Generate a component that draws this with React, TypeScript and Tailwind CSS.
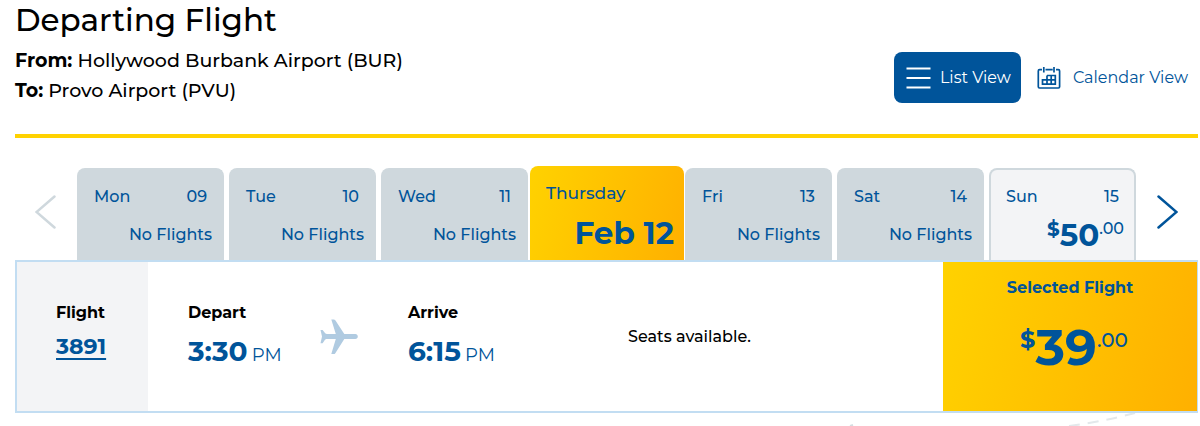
import clsx from "clsx";

interface Day {
  name: string;
  date: string;
  price?: string;
  selected?: boolean;
}

const days: Day[] = [
  { name: "Mon", date: "09" },
  { name: "Tue", date: "10" },
  { name: "Wed", date: "11" },
  { name: "Thursday", date: "Feb 12", selected: true },
  { name: "Fri", date: "13" },
  { name: "Sat", date: "14" },
  { name: "Sun", date: "15", price: "50" },
];

function ListIcon() {
  return (
    <svg width="25" height="22" viewBox="0 0 25 22" stroke="currentColor" strokeWidth="2" aria-hidden="true">
      <path d="M0.500 1.500h24M0.500 11h24M0.500 20.500h24" />
    </svg>
  );
}

function CalendarIcon() {
  return (
    <svg width="24" height="24" viewBox="0 0 24 24" fill="none" stroke="currentColor" aria-hidden="true">
      <path
        d="M5 3.700H2.500a1.200 1.200 0 0 0-1.200 1.200v15.900A1.200 1.200 0 0 0 2.500 22h18.900a1.200 1.200 0 0 0 1.200-1.200V4.900a1.200 1.200 0 0 0-1.200-1.200H19M8.500 3.700h7.200M6.800 1v5.500M17 1v5.500"
        strokeWidth="1.7"
      />
      <path d="M10 9.500h8.300v8.700H5.500v-4.400h12.800M5.500 13.800v4.400M10 9.500v8.700M14.200 9.500v8.700" strokeWidth="1.7" />
    </svg>
  );
}

function PlaneIcon() {
  return (
    <svg width="38" height="36" viewBox="0 0 38 36" fill="#b0cbe1" aria-hidden="true">
      <path d="M11.300.4h2.500c.6 0 1.100.3 1.500.9l9 13.600h11c1.500 0 2.500 1.200 2.500 2.500s-1 2.500-2.500 2.500h-11l-9 14.300c-.4.600-.9.900-1.500.9h-2.500l4.500-15.200H6.800c-1 0-1.500.4-2 1.200l-2.200 3.200H.5l1.500-6.900L.5 10.900h2.100l2.200 2.900c.5.700 1 1.100 2 1.100h9z" />
    </svg>
  );
}

function Price({ amount, large }: { amount: string; large?: boolean }) {
  return (
    <span className="flex items-start text-[#00549a]">
      <span className={clsx("font-bold", large ? "text-2xl leading-8" : "text-xl leading-6")}>$</span>
      <span className={clsx("font-bold", large ? "text-[50px] leading-12" : "text-[31px] leading-9")}>
        {amount}
      </span>
      <span className={clsx("font-medium", large ? "text-xl leading-8" : "text-base leading-6")}>.00</span>
    </span>
  );
}

function DayTab({ day }: { day: Day }) {
  if (day.selected) {
    return (
      <button
        role="tab"
        aria-selected="true"
        className="-mr-1 -ml-[3px] flex h-[94px] flex-col items-start rounded-t-lg bg-linear-105 from-[#ffd200] to-[#ffb000] pt-[15px] pr-[10px] pl-4 text-[#00549a]"
      >
        <span className="text-[17px] leading-6 font-medium">{day.name}</span>
        <span className="mt-2 self-end text-[31px] leading-10 font-bold">{day.date}</span>
      </button>
    );
  }

  return (
    <button
      role="tab"
      aria-selected="false"
      className={clsx(
        "flex h-[92px] flex-col rounded-t-lg border-2 border-b-0 border-[#cfd8dd] px-[15px] pt-[15px] text-base leading-6 font-medium text-[#00549a]",
        day.price ? "bg-[#f3f4f6]" : "bg-[#cfd8dd]"
      )}
    >
      <span className="flex w-full justify-between">
        <span>{day.name}</span>
        <span>{day.date}</span>
      </span>
      <span className="-mr-[5px] flex flex-1 items-center self-end">
        {day.price ? <Price amount={day.price} /> : "No Flights"}
      </span>
    </button>
  );
}

function FlightTime({ label, time }: { label: string; time: string }) {
  return (
    <div>
      <h2 className="text-base leading-6 font-bold">{label}</h2>
      <p className="mt-1.5 leading-10 text-[#00549a]">
        <span className="text-[28px] font-bold">{time}</span> <span className="text-lg">PM</span>
      </p>
    </div>
  );
}

export default function App() {
  return (
    <main className="overflow-hidden bg-white pr-0.5 pl-[15px] font-[Montserrat,Inter,sans-serif] text-black">
      <header className="flex items-end justify-between border-b-4 border-[#ffd200] pb-7">
        <div className="text-[19px] leading-[30px] font-medium">
          <h1 className="pb-1.5 text-[31px] leading-10">Departing Flight</h1>
          <p>
            <strong className="font-bold">From:</strong> Hollywood Burbank Airport (BUR)
          </p>
          <p>
            <strong className="font-bold">To:</strong> Provo Airport (PVU)
          </p>
        </div>
        <div className="mb-[3px] flex items-center text-base leading-6 text-[#00549a]">
          <button className="flex h-[51px] items-center gap-[9px] rounded-lg bg-[#00549a] px-[10px] pl-3 text-white">
            <ListIcon />
            List View
          </button>
          <button className="flex h-[51px] items-center gap-3 pr-[10px] pl-4">
            <CalendarIcon />
            Calendar View
          </button>
        </div>
      </header>

      <div className="mt-7 flex items-end">
        <button aria-label="Previous days" className="flex h-[94px] w-[62px] items-center justify-center text-[#cfd8dd]">
          <svg width="22" height="36" viewBox="0 0 22 36" fill="none" stroke="currentColor" strokeWidth="2.5" strokeLinecap="round">
            <path d="M19.500 1.500 1.500 17l18 15.500" />
          </svg>
        </button>
        <div role="tablist" aria-label="Departure date" className="grid flex-1 grid-cols-7 items-end gap-[5px]">
          {days.map((day) => (
            <DayTab key={day.name} day={day} />
          ))}
        </div>
        <button aria-label="Next days" className="flex h-[94px] w-[62px] items-center justify-center text-[#00549a]">
          <svg width="22" height="36" viewBox="0 0 22 36" fill="none" stroke="currentColor" strokeWidth="2.5" strokeLinecap="round">
            <path d="M2.500 1.500 20.500 17l-18 15.500" />
          </svg>
        </button>
      </div>

      <section className="flex min-h-[153px] border-2 border-r border-[#c2ddf2]">
        <div className="w-[131px] bg-[#f3f4f6] pt-[39px] pl-[39px]">
          <h2 className="text-base leading-6 font-bold">Flight</h2>
          <a href="#3891" className="mt-1.5 block text-[22px] leading-8 font-bold text-[#00549a] underline decoration-2 underline-offset-4">
            3891
          </a>
        </div>
        <div className="grid flex-1 grid-cols-[220fr_220fr_315fr] pt-[39px] pl-10">
          <div className="flex justify-between pr-[50px]">
            <FlightTime label="Depart" time="3:30" />
            <span className="pt-[18px]">
              <PlaneIcon />
            </span>
          </div>
          <FlightTime label="Arrive" time="6:15" />
          <p className="pt-6 text-base leading-6 font-medium">Seats available.</p>
        </div>
        <button className="flex w-[254px] flex-col items-center bg-linear-105 from-[#ffd200] to-[#ffb000] pt-[14px] text-[#00549a]">
          <span className="text-base leading-6 font-bold">Selected Flight</span>
          <span className="mt-6 pl-2">
            <Price amount="39" large />
          </span>
        </button>
      </section>

      <svg className="ml-auto block" width="352" height="13" viewBox="0 0 352 13" fill="none" aria-hidden="true">
        <path d="M223 13Q255 9 289 0" stroke="#e3e8eb" strokeWidth="2" strokeDasharray="11 8" />
        <path d="M4 13l3-1" stroke="#d5dde1" strokeWidth="2" />
      </svg>
    </main>
  );
}
